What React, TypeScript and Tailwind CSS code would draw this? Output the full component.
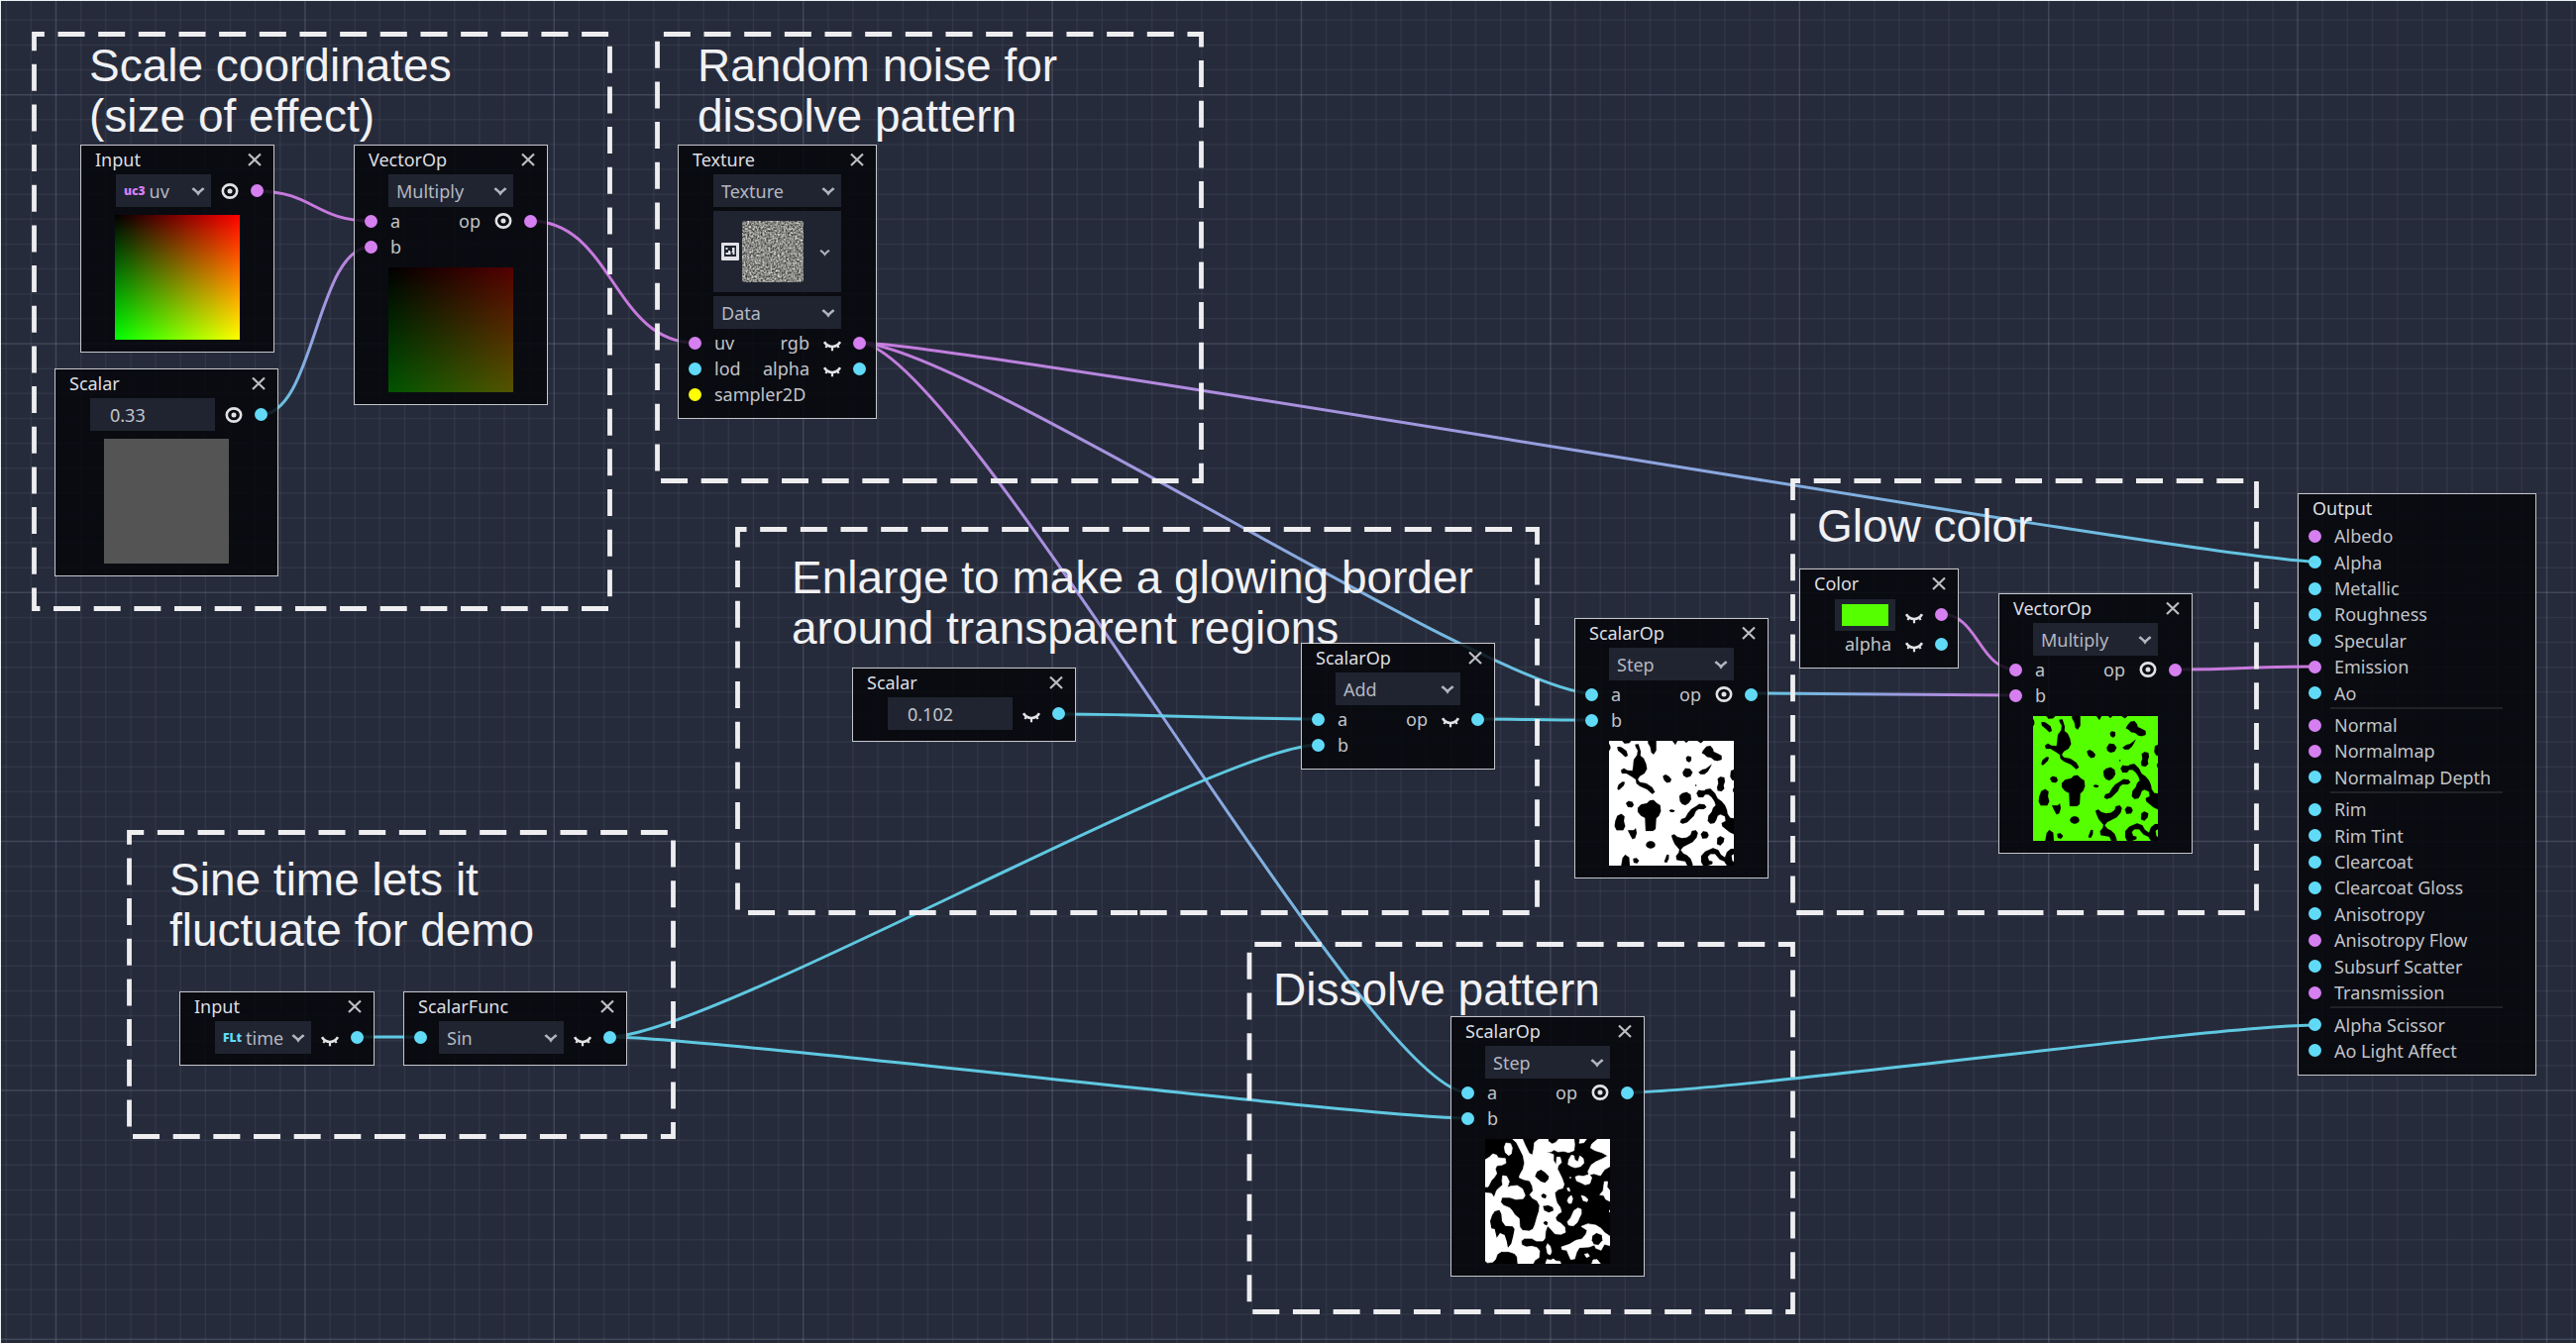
import React from "react";

const CYAN = "#63d4ee";
const PINK = "#d47fea";

/* ---------- canvas background ---------- */

const GRID = 25.13;
const indexes = Array.from({ length: 106 }, (_, i) => i - 3);

function GridLines() {
  return (
    <svg className="absolute inset-0 h-full w-full" aria-hidden="true">
      {indexes.map((i) => (
        <g key={i} stroke="#c8d0e8">
          <line
            x1={56.5 + i * 25.14}
            x2={56.5 + i * 25.14}
            y1="0"
            y2="100%"
            strokeWidth="1.5"
            strokeOpacity={i % 10 === 0 ? 0.17 : 0.065}
          />
          <line
            x1="0"
            x2="100%"
            y1={95.7 + i * GRID}
            y2={95.7 + i * GRID}
            strokeWidth="1.5"
            strokeOpacity={i % 10 === 0 ? 0.17 : 0.065}
          />
        </g>
      ))}
    </svg>
  );
}

/* ---------- connections ---------- */

type Wire = [number, number, number, number, string, string];

const wires: Wire[] = [
  [259, 193, 375, 223, PINK, PINK],
  [262, 419, 375, 249, CYAN, PINK],
  [535, 223, 702, 346, PINK, PINK],
  [867, 346, 2337, 567, PINK, CYAN],
  [867, 346, 1607, 700, PINK, CYAN],
  [867, 346, 1481, 1103, PINK, CYAN],
  [1068, 721, 1331, 726, CYAN, CYAN],
  [615, 1047, 1331, 752, CYAN, CYAN],
  [615, 1047, 1481, 1129, CYAN, CYAN],
  [1491, 726, 1607, 727, CYAN, CYAN],
  [1767, 700, 2035, 702, CYAN, PINK],
  [1959, 620, 2035, 676, PINK, PINK],
  [2195, 676, 2337, 673, PINK, PINK],
  [1642, 1103, 2337, 1035, CYAN, CYAN],
  [361, 1047, 425, 1047, CYAN, CYAN],
];

function Wires() {
  return (
    <svg className="pointer-events-none absolute inset-0 h-full w-full" aria-hidden="true">
      {wires.map(([x1, y1, x2, y2, from, to], i) => {
        const bend = Math.min(100, (x2 - x1) / 2);
        return (
          <g key={i}>
            <linearGradient id={`wire-${i}`} gradientUnits="userSpaceOnUse" x1={x1} y1={y1} x2={x2} y2={y2}>
              <stop offset="0" stopColor={from} />
              <stop offset="1" stopColor={to} />
            </linearGradient>
            <path
              d={`M${x1} ${y1} C${x1 + bend} ${y1} ${x2 - bend} ${y2} ${x2} ${y2}`}
              fill="none"
              stroke={`url(#wire-${i})`}
              strokeWidth="3"
              strokeOpacity="0.93"
            />
          </g>
        );
      })}
    </svg>
  );
}

/* ---------- annotations ---------- */

type Frame = [number, number, number, number];

const frames: Frame[] = [
  [34.5, 34.5, 615.5, 614.5],
  [663.5, 34.5, 1212.5, 485.5],
  [744.5, 534.5, 1551.5, 921.5],
  [130.5, 840.5, 679.5, 1147.5],
  [1261, 953.5, 1809.5, 1324.5],
  [1809.5, 485.5, 2277.5, 921.5],
];

function Frames() {
  return (
    <svg className="pointer-events-none absolute inset-0 h-full w-full" aria-hidden="true">
      {frames.map(([l, t, r, b], i) => (
        <path
          key={i}
          d={`M${(l + r) / 2} ${b} H${l} V${t} H${r} V${b} H${(l + r) / 2}`}
          fill="none"
          stroke="#eeeef0"
          strokeWidth="4.8"
          strokeDasharray="27 13.66"
        />
      ))}
    </svg>
  );
}

function Note({ className, lines }: { className: string; lines: string[] }) {
  return (
    <p
      className={`pointer-events-none absolute font-['Liberation_Sans',Arial,sans-serif] text-[46px] leading-[51px] whitespace-nowrap text-[#f1f1f4] ${className}`}
    >
      {lines.map((line) => (
        <span key={line} className="block">
          {line}
        </span>
      ))}
    </p>
  );
}

/* ---------- node parts ---------- */

const portColors = { vec: "bg-[#d67ff0]", num: "bg-[#61daf7]", tex: "bg-[#ffff00]", none: "bg-transparent" };
type Kind = keyof typeof portColors;

function Port({ kind }: { kind: Kind }) {
  return <span className={`size-[13px] shrink-0 rounded-full ${portColors[kind]}`} />;
}

function Eye({ open = false }: { open?: boolean }) {
  return (
    <button type="button" aria-label={open ? "Hide preview" : "Show preview"} className="size-[18px] shrink-0">
      <svg viewBox="0 0 18 18" className="size-[18px]" fill="none" stroke="#e2e2e4">
        {open ? (
          <>
            <ellipse cx="9" cy="9" rx="7.2" ry="6.6" strokeWidth="2.6" />
            <circle cx="9" cy="9" r="2.5" fill="#e2e2e4" stroke="none" />
          </>
        ) : (
          <>
            <path d="M1 8.2C4.5 14.6 13.500 14.6 17 8.2" strokeWidth="2.6" />
            <path d="M9 13V17.200M4 11.500L2.400 14M14 11.500L15.600 14" strokeWidth="2.2" />
          </>
        )}
      </svg>
    </button>
  );
}

function Chevron({ className }: { className: string }) {
  return (
    <svg
      viewBox="0 0 14 10"
      className={`pointer-events-none absolute ${className}`}
      fill="none"
      stroke="#b2b5be"
      strokeWidth="2.4"
    >
      <path d="M1.5 2C2.5 3.5 5 4.5 7 7.5C9 4.5 11.5 3.5 12.5 2" />
    </svg>
  );
}

function Drop({ value, label, tag }: { value: string; label: string; tag?: React.ReactNode }) {
  return (
    <span className="relative flex h-[33px] flex-1 items-center bg-[#202431] pl-2">
      {tag}
      <select aria-label={label} className="h-full w-full min-w-0 appearance-none bg-transparent text-[#b4b7c0]" defaultValue={value}>
        <option>{value}</option>
      </select>
      <Chevron className="right-[6px] top-[12px] h-[10px] w-[14px]" />
    </span>
  );
}

function Tag({ text, className }: { text: string; className: string }) {
  return <span className={`mr-1 shrink-0 text-[12px] leading-[18px] font-black ${className}`}>{text}</span>;
}

function NumberBox({ value, label }: { value: string; label: string }) {
  return (
    <input
      type="text"
      aria-label={label}
      defaultValue={value}
      className="h-[33px] w-[126px] bg-[#202431] pl-5 text-[#c2c4cb]"
    />
  );
}

function Row({
  left = "none",
  right = "none",
  label,
  out,
  eye,
}: {
  left?: Kind;
  right?: Kind;
  label?: string;
  out?: string;
  eye?: "open" | "closed";
}) {
  return (
    <div className="flex h-[26px] items-center px-[10px]">
      <Port kind={left} />
      <span className="pl-[13px]">{label}</span>
      <span className="flex-1 pr-[14px] text-right">{out}</span>
      {eye && <Eye open={eye === "open"} />}
      {right !== "none" && (
        <span className="flex pl-3">
          <Port kind={right} />
        </span>
      )}
    </div>
  );
}

function ControlRow({
  left = "none",
  right,
  open,
  children,
}: {
  left?: Kind;
  right: Kind;
  open?: boolean;
  children: React.ReactNode;
}) {
  return (
    <div className="flex h-[33px] items-center px-[10px]">
      <Port kind={left} />
      <div className="flex flex-1 pl-[12px] pr-[10px]">{children}</div>
      <Eye open={open} />
      <span className="flex pl-3">
        <Port kind={right} />
      </span>
    </div>
  );
}

function Node({
  title,
  className,
  closable = true,
  children,
}: {
  title: string;
  className: string;
  closable?: boolean;
  children: React.ReactNode;
}) {
  return (
    <section
      className={`absolute border border-[#c4c6cb] bg-[#05060ad9] pb-[11px] font-['Noto_Sans',sans-serif] text-[18px] leading-[26px] text-[#c2c3c7] ${className}`}
    >
      <header className="flex h-[29px] items-center pb-px pl-[14px] pr-3">
        <h2 className="flex-1 text-[#dedee1]">{title}</h2>
        {closable && (
          <button type="button" aria-label={`Close ${title}`} className="size-[14px]">
            <svg viewBox="0 0 14 14" className="size-[14px]" fill="none" stroke="#bdbec2" strokeWidth="2.2">
              <path d="M1 1.5L13 13M13 1.5L1 13" />
            </svg>
          </button>
        )}
      </header>
      {children}
    </section>
  );
}

function Preview({ className = "", children }: { className?: string; children?: React.ReactNode }) {
  return <div className={`mx-auto mt-2 mb-px size-[126px] overflow-hidden ${className}`}>{children}</div>;
}

function OpNode({
  title,
  op,
  kind,
  open = true,
  className,
  children,
}: {
  title: string;
  op: string;
  kind: Kind;
  open?: boolean;
  className: string;
  children?: React.ReactNode;
}) {
  return (
    <Node title={title} className={`w-[196px] ${className}`}>
      <div className="mb-px flex px-[34px]">
        <Drop value={op} label={`${title} operator`} />
      </div>
      <Row left={kind} label="a" out="op" eye={open ? "open" : "closed"} right={kind} />
      <Row left={kind} label="b" />
      {children}
    </Node>
  );
}

/* ---------- preview drawings ---------- */

function Spots({ background }: { background: string }) {
  return (
    <svg viewBox="15 13 378 378" className="size-full" fill="#000" stroke="#000" strokeWidth="0.5" strokeLinejoin="round">
      <rect x="15" y="13" width="378" height="378" fill={background} stroke="none" />
      <path d="M15 22Q21 30 19 36L15 44ZM55 13H82L76 20L62 21ZM40 32Q50 28 58 36L68 44L72 58L64 62L54 52L42 42Z" />
      <path d="M94 24L104 23L111 45L110 58L120 66L127 82L130 98L122 112L108 120L102 130L108 138L128 142L146 154L154 168L146 174L130 160L108 150L98 142L96 130L84 122L68 112L54 112L51 102L60 96L70 102L86 104L88 90L90 70L100 56L102 42L96 32Z" />
      <path d="M133 13H158V42L150 54L143 48L140 32L133 20ZM207 13H222L216 25ZM243 13H255L249 19ZM283 13H301L293 20Z" />
      <path d="M300 42L310 30L322 28L330 38L332 46L345 52L356 58V70L344 74L334 72L324 64L312 62L304 54L296 50Z" />
      <path d="M248 64L254 59L264 62L264 72L258 78L250 74ZM238 108L246 96L260 98L268 108L262 120L250 124L240 118Z" />
      <path d="M286 108L298 100L308 98L316 92L326 84L320 96L314 106L304 114L292 114Z" />
      <path d="M178 120L186 115L196 120L204 130L200 138L190 140L182 132ZM40 158L44 146L56 137L63 138L60 148L50 158L44 162Z" />
      <path d="M344 128L352 122L364 124L366 136L362 148L364 158L356 166L344 164L342 154L346 142ZM393 100L384 104L382 122L388 132H393ZM390 158H393V168H391Z" />
      <circle cx="278" cy="148" r="2" />
      <path d="M280 172L286 162L296 164L304 164L308 160L322 158L336 172L344 188L356 196L366 208L372 222L374 234L382 246L393 248V296L380 290L368 280L358 272L356 262L368 256L366 242L352 236L344 240L340 252L334 262L322 264L314 256L316 240L326 228L330 216L338 208L334 196L326 184L316 176L306 176L300 184L286 184Z" />
      <path d="M228 180L236 172L250 168L262 176L264 190L256 202L246 208L236 204L230 196Z" />
      <path d="M66 202L74 195L86 198L90 208L84 215L72 213Z" />
      <path d="M102 216L112 206L130 202L138 194L150 192L160 202L170 208L172 226L166 240L158 248L156 280L148 286L126 286L124 246L112 240L102 228Z" />
      <path d="M197 224L204 221L214 224L211 229L202 229Z" />
      <path d="M280 210L288 204L304 206L310 214L302 220L286 220L278 226L272 240L262 250L252 260L238 264L230 260L234 250L246 246L254 232L264 220Z" />
      <path d="M40 240L52 234L62 242L60 256L64 272L58 284H38L32 272L34 256ZM72 284H90L96 278L99 292L94 308L86 311L80 300Z" />
      <path d="M204 300L212 296L222 304L236 308L250 306L262 298L266 286L278 284L284 292L280 306L268 320L252 328L240 334L232 344L240 354L252 360L262 370L268 386V391H252L246 378L232 376L220 374L218 362L226 352L228 342L214 326L208 312Z" />
      <path d="M293 296L300 287L312 289L317 299L312 308L298 309ZM343 308L352 302L364 308L362 320L352 330L342 326Z" />
      <ellipse cx="141" cy="328" rx="14" ry="11" />
      <path d="M52 391L56 368L64 358L76 366L78 391ZM88 370L98 368L106 376L100 384L90 382ZM182 380L190 358L196 358V370L190 382Z" />
      <path d="M294 380V362L306 348L330 338L346 344L354 358L366 366L372 350L384 340H393V356L386 360L388 376L393 380V391H372L364 378L350 372L336 356H322L314 364L318 376L328 378V386L314 391H300Z" />
    </svg>
  );
}

function DissolveSpots() {
  return (
    <svg viewBox="15 13 378 378" className="size-full" fill="#fff" strokeLinejoin="round">
      <rect x="15" y="13" width="378" height="378" fill="#000" />
      <g stroke="#fff" strokeWidth="2">
        <path d="M15 76L28 68L38 58L50 62L54 70L76 72L78 86L66 92L50 94L46 104L50 118L42 130L34 138L24 158H15Z" />
        <path d="M73 38L78 25L92 27L97 40L94 58L86 63L76 54Z" />
        <path d="M98 13H128L136 32L148 56L158 62L162 44L164 24L178 13H205L206 20L218 28L228 24L238 13H284L286 30L284 48L268 54L252 50L236 52L224 46L214 52L200 52L222 60L222 78L230 92L232 68L242 68L246 84L236 94L234 104L240 116L248 132L254 150L250 162L236 166L226 176L228 190L232 206L242 220L246 234L236 240L228 252L232 262L244 268L256 280L258 296L244 302L226 300L214 286L204 276L198 292L196 314L190 322L170 322L156 314H134L124 322L126 334L140 340L156 338L172 342L180 352L178 372L166 380L160 391H114L112 370L104 360L86 354H64L52 362L46 378L38 386L22 388L15 382V176L34 178L42 190L50 168L68 152L66 140L68 124L80 126L88 142L82 160L92 156L112 154L128 164L136 184L130 194L108 196L90 190H66L62 204L70 214L90 222L98 232L104 242L118 254L120 280L128 290L148 292L160 286L166 272L172 250L178 232L180 214L172 200L158 192L150 182L160 170L158 156L150 140L132 136L118 130L120 122L130 104L134 86L130 64L120 44L110 24Z" />
        <path d="M268 76L276 62L284 64L286 76L296 82L302 64L312 72L314 86L304 96L288 100L276 96L266 90Z" />
        <path d="M345 22L356 13H393V96L376 106L364 124L344 118L330 122L326 112L336 92L350 82L372 72L386 64L368 54L348 48L334 40L338 28ZM302 13H322L314 24L300 26Z" />
        <path d="M288 128L298 124L312 126L330 120L338 130L332 148L318 152L306 146L292 140ZM376 142L386 142L384 158L393 170V202L380 196L374 184L362 182L372 170Z" />
        <path d="M263 162L269 161L272 171L266 170ZM268 190L276 184L280 194L276 208L268 208L264 200ZM306 184L318 188L326 196L324 203L312 200ZM391 229H393V236Z" />
        <path d="M284 230L296 222L306 226V240L300 252L294 266L282 276L268 274L264 264L274 252Z" />
        <path d="M306 278L326 270L350 274L366 284L376 296L393 308V336L376 332L366 350L350 344L346 334L330 340L300 342L292 356L286 376L274 378L262 350L248 348L246 340L270 332L290 320L308 316L320 302L324 290Z" />
        <path d="M200 340L204 330L212 338L216 354L212 364L204 360ZM198 391L202 378L214 380L222 376L228 382L242 384L244 391ZM316 362L326 360L331 368L322 372ZM338 391L342 379L354 378L364 391Z" />
        <circle cx="273" cy="130" r="1.5" />
      </g>
      <g fill="#000">
        <path d="M172 112L184 106L196 114L208 126L206 136L196 146L184 142L174 134L166 126ZM184 183L192 178L201 184L198 193L188 191ZM190 216L206 214L220 220L222 230L208 236L194 230ZM191 266L198 261L205 266L202 275L194 272Z" />
        <path d="M44 232L58 228L64 240L66 262L76 276L98 278L104 286L100 306L94 330L84 342L80 322L74 304L60 298L50 312L44 286L34 284L30 262L36 244Z" />
        <path d="M340 306L352 298L368 304L370 320L358 334L344 332L338 320Z" />
      </g>
    </svg>
  );
}

function NoiseThumb() {
  return (
    <svg className="size-[62px] rounded-[3px]" aria-hidden="true">
      <filter id="noise" x="0" y="0" width="100%" height="100%" colorInterpolationFilters="sRGB">
        <feTurbulence type="fractalNoise" baseFrequency="0.52" numOctaves="2" seed="4" />
        <feColorMatrix values="1.1 0 0 0 -0.02  1.1 0 0 0 -0.02  1.1 0 0 0 -0.03  0 0 0 0 1" />
      </filter>
      <rect width="62" height="62" filter="url(#noise)" />
    </svg>
  );
}

function NoiseIcon() {
  return (
    <svg viewBox="0 0 18 18" className="size-[18px] shrink-0" aria-hidden="true">
      <rect width="18" height="18" rx="1" fill="#e0e1e5" />
      <rect x="3" y="3" width="12" height="11" fill="#1f2330" />
      <path d="M4.5 5h2v2h-2zM11 5h2.500v7h-2v-2h-2v2h-5v-2h2.500v-2h2v1.500h2z" fill="#e0e1e5" />
    </svg>
  );
}

/* ---------- output node ---------- */

const outputs: [string, Kind][][] = [
  [
    ["Albedo", "vec"],
    ["Alpha", "num"],
    ["Metallic", "num"],
    ["Roughness", "num"],
    ["Specular", "num"],
    ["Emission", "vec"],
    ["Ao", "num"],
  ],
  [
    ["Normal", "vec"],
    ["Normalmap", "vec"],
    ["Normalmap Depth", "num"],
  ],
  [
    ["Rim", "num"],
    ["Rim Tint", "num"],
    ["Clearcoat", "num"],
    ["Clearcoat Gloss", "num"],
    ["Anisotropy", "num"],
    ["Anisotropy Flow", "vec"],
    ["Subsurf Scatter", "num"],
    ["Transmission", "vec"],
  ],
  [
    ["Alpha Scissor", "num"],
    ["Ao Light Affect", "num"],
  ],
];

function OutputNode() {
  return (
    <Node title="Output" closable={false} className="left-[2319px] top-[498px] w-[241px]">
      <ul className="flex h-[546px] flex-col">
        {outputs.map((group, g) => (
          <React.Fragment key={g}>
            {g > 0 && (
              <li aria-hidden="true" className="h-[6px] shrink-0 pl-8 pr-[33px] pt-px">
                <span className="block h-[2px] bg-[#202226]" />
              </li>
            )}
            {group.map(([name, kind]) => (
              <li key={name} className="flex min-h-0 flex-1 items-center px-[10px]">
                <Port kind={kind} />
                <span className="pl-[13px]">{name}</span>
              </li>
            ))}
          </React.Fragment>
        ))}
      </ul>
    </Node>
  );
}

/* ---------- page ---------- */

export default function App() {
  return (
    <main className="relative min-h-screen w-full overflow-hidden border-l border-t border-[#e6f3f2] bg-[#262b3b]">
      <div className="absolute -left-px -top-px right-0 bottom-0">
        <GridLines />
        <OutputNode />
        <Wires />

        <Node title="Input" className="left-[81px] top-[146px] w-[196px]">
          <ControlRow right="vec" open>
            <Drop value="uv" label="Input name" tag={<Tag text="uc3" className="text-[#d67ff0]" />} />
          </ControlRow>
          <Preview className="bg-[linear-gradient(to_right,#000,#f00),linear-gradient(to_bottom,#000,#0f0)] bg-blend-screen" />
        </Node>

        <Node title="Scalar" className="left-[55px] top-[372px] w-[226px]">
          <ControlRow right="num" open>
            <NumberBox value="0.33" label="Scalar value" />
          </ControlRow>
          <Preview className="bg-[#545454]" />
        </Node>

        <OpNode title="VectorOp" op="Multiply" kind="vec" className="left-[357px] top-[146px]">
          <Preview className="bg-[linear-gradient(to_right,#000,#540000),linear-gradient(to_bottom,#000,#005400)] bg-blend-screen" />
        </OpNode>

        <Node title="Texture" className="left-[684px] top-[146px] w-[201px]">
          <div className="mb-px flex flex-col gap-1 px-[35px]">
            <div className="flex">
              <Drop value="Texture" label="Texture source" />
            </div>
            <button type="button" aria-label="Noise texture" className="relative flex h-[82px] items-center gap-[3px] bg-[#202431] pl-2">
              <NoiseIcon />
              <NoiseThumb />
              <Chevron className="right-[11px] top-[38px] h-[8px] w-[11px]" />
            </button>
            <div className="flex">
              <Drop value="Data" label="Texture type" />
            </div>
          </div>
          <Row left="vec" label="uv" out="rgb" eye="closed" right="vec" />
          <Row left="num" label="lod" out="alpha" eye="closed" right="num" />
          <Row left="tex" label="sampler2D" />
        </Node>

        <Node title="Scalar" className="left-[860px] top-[674px] w-[226px]">
          <ControlRow right="num">
            <NumberBox value="0.102" label="Border width" />
          </ControlRow>
        </Node>

        <OpNode title="ScalarOp" op="Add" kind="num" open={false} className="left-[1313px] top-[649px]" />

        <OpNode title="ScalarOp" op="Step" kind="num" className="left-[1589px] top-[624px]">
          <Preview>
            <Spots background="#fff" />
          </Preview>
        </OpNode>

        <Node title="Color" className="left-[1816px] top-[574px] w-[161px]">
          <ControlRow right="vec">
            <label className="flex h-[32px] flex-1 items-center bg-[#202431] px-[7px]">
              <input
                type="color"
                aria-label="Color"
                defaultValue="#55ff00"
                className="h-[22px] w-full appearance-none border-0 bg-transparent p-0 [&::-webkit-color-swatch-wrapper]:p-0 [&::-webkit-color-swatch]:rounded-none [&::-webkit-color-swatch]:border-0"
              />
            </label>
          </ControlRow>
          <Row out="alpha" eye="closed" right="num" />
        </Node>

        <OpNode title="VectorOp" op="Multiply" kind="vec" className="left-[2017px] top-[599px]">
          <Preview>
            <Spots background="#55ff00" />
          </Preview>
        </OpNode>

        <Node title="Input" className="left-[181px] top-[1001px] w-[197px]">
          <ControlRow right="num">
            <Drop value="time" label="Input name" tag={<Tag text="FLt" className="text-[#61daf7]" />} />
          </ControlRow>
        </Node>

        <Node title="ScalarFunc" className="left-[407px] top-[1001px] w-[226px]">
          <ControlRow left="num" right="num">
            <Drop value="Sin" label="Function" />
          </ControlRow>
        </Node>

        <OpNode title="ScalarOp" op="Step" kind="num" className="left-[1464px] top-[1026px]">
          <Preview>
            <DissolveSpots />
          </Preview>
        </OpNode>

        <Frames />
        <Note className="left-[90px] top-[41px]" lines={["Scale coordinates", "(size of effect)"]} />
        <Note className="left-[704px] top-[41px]" lines={["Random noise for", "dissolve pattern"]} />
        <Note className="left-[799px] top-[558px]" lines={["Enlarge to make a glowing border", "around transparent regions"]} />
        <Note className="left-[171px] top-[863px]" lines={["Sine time lets it", "fluctuate for demo"]} />
        <Note className="left-[1285px] top-[974px]" lines={["Dissolve pattern"]} />
        <Note className="left-[1834px] top-[506px]" lines={["Glow color"]} />
      </div>
    </main>
  );
}
